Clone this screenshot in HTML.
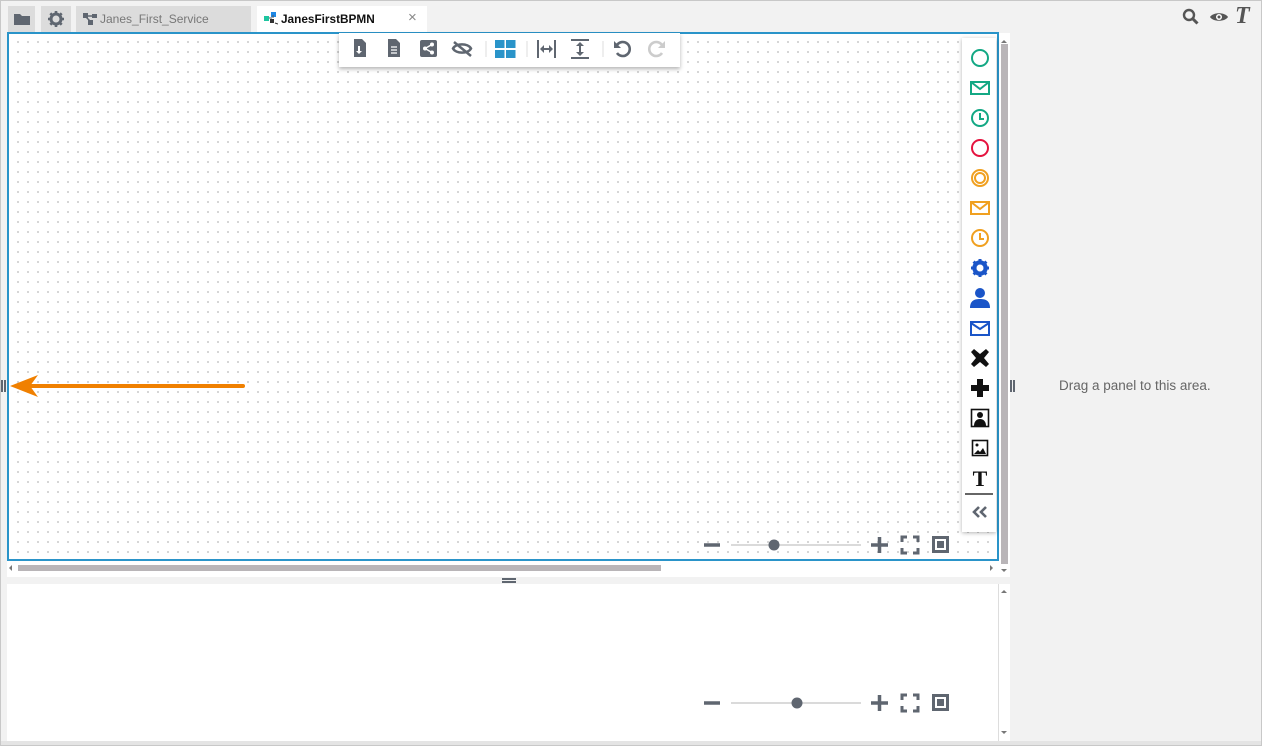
<!DOCTYPE html>
<html><head><meta charset="utf-8"><style>
*{box-sizing:border-box;margin:0;padding:0}
body{width:1262px;height:746px;background:#f2f2f2;font-family:"Liberation Sans",sans-serif;position:relative;overflow:hidden}
.a{position:absolute}
.frame{left:0;top:0;width:1262px;height:746px;border:1px solid #c8c8c8}
.tab{top:6px;height:26px;background:#dcdcdc}
.dots{background-color:#fff;background-image:radial-gradient(circle,#cfcfcf 0.9px,transparent 1.2px);background-size:10px 10px;background-position:4px 3px}
</style></head><body>
<div class="a frame"></div>
<div class="a tab" style="left:8px;width:27px"><svg class="a" style="left:6px;top:7px" width="16" height="12" viewBox="0 0 16 12"><path d="M0 1h6l2 2h8v9H0z" fill="#5f6670"/></svg></div>
<div class="a tab" style="left:41px;width:30px"><svg class="a" style="left:7px;top:5px" width="16" height="16" viewBox="0 0 16 16"><circle cx="8" cy="8" r="5" fill="none" stroke="#5f6670" stroke-width="3"/><g stroke="#5f6670" stroke-width="2.6"><path d="M8 0v3M8 13v3M0 8h3M13 8h3M2.3 2.3l2.2 2.2M11.5 11.5l2.2 2.2M2.3 13.7l2.2-2.2M11.5 4.5l2.2-2.2"/></g></svg></div>
<div class="a tab" style="left:76px;width:175px"><svg class="a" style="left:7px;top:7px" width="14" height="12" viewBox="0 0 14 12"><rect x="0" y="0" width="5" height="5" fill="#5f6670"/><rect x="9" y="1" width="5" height="4" fill="#5f6670"/><rect x="5" y="7" width="5" height="5" fill="#5f6670"/><path d="M3 4l4 4M5 3h4" stroke="#5f6670" stroke-width="1.5"/></svg><span class="a" style="left:24px;top:6px;font-size:12px;color:#777">Janes_First_Service</span></div>
<div class="a" style="left:257px;top:6px;width:170px;height:27px;background:#fff"><svg class="a" style="left:7px;top:6px" width="14" height="13" viewBox="0 0 14 13"><rect x="7" y="0" width="5" height="5" fill="#1e88e5"/><rect x="0" y="4" width="5" height="5" fill="#1dc5a0"/><rect x="6" y="7" width="4" height="4" fill="#333"/><path d="M5 6h3M9 3v3" stroke="#555" stroke-width="1"/><path d="M11 11l3 1" stroke="#333"/></svg><span class="a" style="left:24px;top:6px;font-size:11.8px;font-weight:bold;color:#111">JanesFirstBPMN</span><span class="a" style="left:151px;top:3px;font-size:15px;color:#888">×</span></div>
<svg class="a" style="left:1182px;top:8px" width="20" height="18" viewBox="0 0 20 18"><circle cx="7" cy="7" r="5" fill="none" stroke="#555" stroke-width="2.4"/><path d="M10.5 10.5l5 5" stroke="#555" stroke-width="3"/></svg>
<svg class="a" style="left:1209px;top:11px" width="20" height="12" viewBox="0 0 20 12"><path d="M1 6C4 1 16 1 19 6C16 11 4 11 1 6z" fill="#555"/><circle cx="10" cy="6" r="3" fill="#fff"/><circle cx="10" cy="6" r="1.5" fill="#555"/></svg>
<span class="a" style="left:1235px;top:3px;font-family:'Liberation Serif',serif;font-style:italic;font-weight:bold;font-size:24px;color:#555">T</span>
<div class="a dots" style="left:7px;top:32px;width:992px;height:529px;border:2px solid #2a94c9"></div>
<div class="a" style="left:999px;top:33px;width:11px;height:544px;background:#fff"></div>
<div class="a" style="left:1001px;top:44px;width:7px;height:520px;background:#b9b5b8"></div>
<div class="a" style="left:1001px;top:37px;width:0;height:0;border:3px solid transparent;border-bottom:3px solid #777"></div>
<div class="a" style="left:1001px;top:569px;width:0;height:0;border:3px solid transparent;border-top:3px solid #777"></div>
<div class="a" style="left:7px;top:561px;width:992px;height:16px;background:#fff"></div>
<div class="a" style="left:18px;top:565px;width:643px;height:6px;background:#b9b5b8"></div>
<div class="a" style="left:9px;top:565px;width:0;height:0;border:3px solid transparent;border-right:3px solid #777;border-left:0"></div>
<div class="a" style="left:990px;top:565px;width:0;height:0;border:3px solid transparent;border-left:3px solid #777;border-right:0"></div>
<div class="a" style="left:502px;top:578px;width:14px;height:2px;background:#5f6670"></div>
<div class="a" style="left:502px;top:581px;width:14px;height:2px;background:#5f6670"></div>
<div class="a" style="left:7px;top:584px;width:992px;height:157px;background:#fff"></div>
<div class="a" style="left:998px;top:584px;width:12px;height:157px;background:#fff;border-left:1px solid #ddd"></div>
<div class="a" style="left:1001px;top:587px;width:0;height:0;border:3px solid transparent;border-bottom:3px solid #777"></div>
<div class="a" style="left:1001px;top:731px;width:0;height:0;border:3px solid transparent;border-top:3px solid #777"></div>
<div class="a" style="left:1px;top:741px;width:1260px;height:4px;background:#e4e4e4"></div>
<div class="a" style="left:1px;top:380px;width:2px;height:12px;background:#5f6670"></div>
<div class="a" style="left:4px;top:380px;width:2px;height:12px;background:#5f6670"></div>
<div class="a" style="left:1010px;top:380px;width:2px;height:12px;background:#5f6670"></div>
<div class="a" style="left:1013px;top:380px;width:2px;height:12px;background:#5f6670"></div>
<span class="a" style="left:1059px;top:378px;font-size:13.5px;color:#666">Drag a panel to this area.</span>
<svg class="a" style="left:8px;top:372px" width="240" height="28" viewBox="0 0 240 28"><path d="M235 14H22" stroke="#f08000" stroke-width="4" stroke-linecap="round"/><path d="M2 14L30 3L22 14L30 25z" fill="#f08000"/></svg>
<div class="a" style="left:339px;top:33px;width:341px;height:34px;background:#fff;box-shadow:0 2px 4px rgba(0,0,0,.3)">
<svg width="341" height="34" viewBox="0 0 341 34">
<g fill="#5f6670">
<path d="M15 6h8l4 4v14H15z"/><path d="M19 13h2v5h2l-3 3-3-3h2z" fill="#fff"/>
<path d="M49 6h8l4 4v14H49z"/><path d="M52 14h6M52 17h6M52 20h6" stroke="#fff" stroke-width="1.2"/>
<rect x="81" y="7" width="17" height="17" rx="2"/><g fill="#fff"><circle cx="86" cy="15.5" r="2"/><circle cx="93" cy="11.5" r="2"/><circle cx="93" cy="19.5" r="2"/></g><path d="M86 15.5L93 11.5M86 15.5L93 19.5" stroke="#fff" stroke-width="1.3"/>
<path d="M114 15.5C117 10 129 10 132 15.5C129 21 117 21 114 15.5z" fill="none" stroke="#5f6670" stroke-width="2.5"/><path d="M115 9l17 14" stroke="#5f6670" stroke-width="2.5"/>
</g>
<path d="M147 8v16M188 8v16M264 8v16" stroke="#ddd"/>
<g fill="#2a94c9"><rect x="156" y="7" width="9.5" height="8"/><rect x="167" y="7" width="9.5" height="8"/><rect x="156" y="17" width="9.5" height="8"/><rect x="167" y="17" width="9.5" height="8"/></g>
<g stroke="#5f6670" stroke-width="2" fill="none"><path d="M199 7v18M216 7v18M202 16h11"/><path d="M232 7h18M232 25h18M241 10v12"/></g>
<g fill="#5f6670"><path d="M201 16l4-4v8zM214 16l-4-4v8zM241 9l-4 4h8zM241 23l-4-4h8z"/></g>
<path d="M279 12a7 7 0 1 1 0 8" fill="none" stroke="#5f6670" stroke-width="2.6" transform="translate(-1 0)"/><path d="M275 8v7h7z" fill="#5f6670"/>
<path d="M323 12a7 7 0 1 0 0 8" fill="none" stroke="#ccc" stroke-width="2.6"/><path d="M326 8v7h-7z" fill="#ccc"/>
</svg></div>
<div class="a" style="left:962px;top:38px;width:34px;height:494px;background:#fff;box-shadow:0 1px 4px rgba(0,0,0,.3)">
<svg width="34" height="494" viewBox="0 0 34 494">
<circle cx="18" cy="20" r="8" fill="none" stroke="#13a884" stroke-width="2"/>
<rect x="9" y="44" width="18" height="12" fill="none" stroke="#13a884" stroke-width="2"/><path d="M9 44l9 7 9-7" fill="none" stroke="#13a884" stroke-width="2"/>
<circle cx="18" cy="80" r="8" fill="none" stroke="#13a884" stroke-width="2"/><path d="M18 75v6h4" fill="none" stroke="#13a884" stroke-width="2"/>
<circle cx="18" cy="110" r="8" fill="none" stroke="#e5133f" stroke-width="2"/>
<circle cx="18" cy="140" r="8" fill="none" stroke="#f0a020" stroke-width="2"/><circle cx="18" cy="140" r="5" fill="none" stroke="#f0a020" stroke-width="2"/>
<rect x="9" y="164" width="18" height="12" fill="none" stroke="#f0a020" stroke-width="2"/><path d="M9 164l9 7 9-7" fill="none" stroke="#f0a020" stroke-width="2"/>
<circle cx="18" cy="200" r="8" fill="none" stroke="#f0a020" stroke-width="2"/><path d="M18 195v6h4" fill="none" stroke="#f0a020" stroke-width="2"/>
<circle cx="18" cy="230" r="6" fill="none" stroke="#1a55c8" stroke-width="3.4"/><g stroke="#1a55c8" stroke-width="3"><path d="M18 221v18M9 230h18M11.6 223.6l12.8 12.8M11.6 236.4l12.8-12.8"/></g><circle cx="18" cy="230" r="3.5" fill="#fff"/>
<circle cx="18" cy="255" r="5" fill="#1a55c8"/><path d="M8 270c0-7 4-9 10-9s10 2 10 9z" fill="#1a55c8"/>
<rect x="9" y="284" width="18" height="13" fill="none" stroke="#1a55c8" stroke-width="2"/><path d="M9 285l9 6 9-6" fill="none" stroke="#1a55c8" stroke-width="2"/>
<path d="M12 311l6 5 6-5 3 3-5 6 5 6-3 3-6-5-6 5-3-3 5-6-5-6z" fill="#111"/>
<path d="M15 341h6v6h6v6h-6v6h-6v-6h-6v-6h6z" fill="#111"/>
<rect x="9.5" y="371.5" width="17" height="17" fill="none" stroke="#111" stroke-width="1.6"/><circle cx="18" cy="377" r="3" fill="#111"/><path d="M12 388c0-5 3-7 6-7s6 2 6 7z" fill="#111"/>
<rect x="10.5" y="402.5" width="15" height="15" fill="none" stroke="#111" stroke-width="1.6"/><circle cx="15" cy="407" r="1.5" fill="#111"/><path d="M12 416l4-4 2 2 3-4 3 6z" fill="#111"/>
<text x="18" y="448" text-anchor="middle" font-family="Liberation Serif,serif" font-weight="bold" font-size="22" fill="#111">T</text>
<path d="M3 456h28" stroke="#333" stroke-width="1.5"/>
<path d="M17 469l-5 5 5 5M24 469l-5 5 5 5" fill="none" stroke="#5f6670" stroke-width="2.6"/>
</svg></div>
<svg class="a" style="left:700px;top:533px" width="255" height="24" viewBox="0 0 255 24">
<path d="M4 12h16" stroke="#5f6670" stroke-width="3.5"/><path d="M31 12h130" stroke="#b5b5b5"/><circle cx="74" cy="12" r="5.5" fill="#5f6670"/>
<path d="M171 12h17M179.5 4v16" stroke="#5f6670" stroke-width="3.5"/>
<path d="M202 9V4h5M213 4h5v5M218 15v5h-5M207 20h-5v-5" fill="none" stroke="#5f6670" stroke-width="3"/>
<rect x="232" y="3" width="17" height="17" fill="#5f6670"/><rect x="235" y="6" width="11" height="11" fill="#fff"/><rect x="237" y="8" width="7" height="7" fill="#5f6670"/>
</svg>
<svg class="a" style="left:700px;top:691px" width="255" height="24" viewBox="0 0 255 24">
<path d="M4 12h16" stroke="#5f6670" stroke-width="3.5"/><path d="M31 12h130" stroke="#b5b5b5"/><circle cx="97" cy="12" r="5.5" fill="#5f6670"/>
<path d="M171 12h17M179.5 4v16" stroke="#5f6670" stroke-width="3.5"/>
<path d="M202 9V4h5M213 4h5v5M218 15v5h-5M207 20h-5v-5" fill="none" stroke="#5f6670" stroke-width="3"/>
<rect x="232" y="3" width="17" height="17" fill="#5f6670"/><rect x="235" y="6" width="11" height="11" fill="#fff"/><rect x="237" y="8" width="7" height="7" fill="#5f6670"/>
</svg>
</body></html>
